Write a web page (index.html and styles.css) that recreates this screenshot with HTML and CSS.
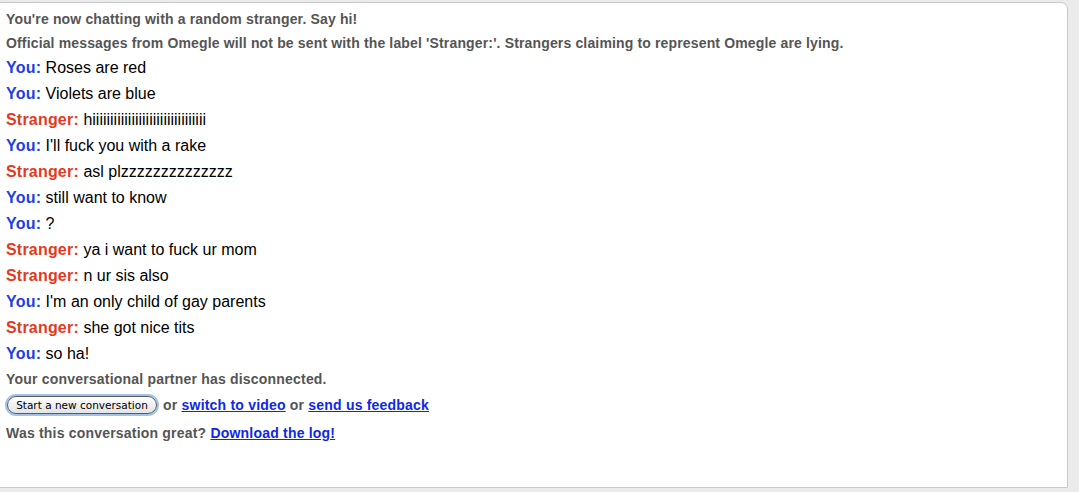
FILE: index.html
```html
<!DOCTYPE html>
<html>
<head>
<meta charset="utf-8">
<link rel="stylesheet" href="styles.css">
</head>
<body>
<div class="log">
  <div class="info">You're now chatting with a random stranger. Say hi!</div>
  <div class="info">Official messages from Omegle will not be sent with the label 'Stranger:'. Strangers claiming to represent Omegle are lying.</div>
  <div class="msg"><span class="you">You:</span> Roses are red</div>
  <div class="msg"><span class="you">You:</span> Violets are blue</div>
  <div class="msg"><span class="stranger">Stranger:</span> hiiiiiiiiiiiiiiiiiiiiiiiiiiiiiiii</div>
  <div class="msg"><span class="you">You:</span> I'll fuck you with a rake</div>
  <div class="msg"><span class="stranger">Stranger:</span> asl plzzzzzzzzzzzzzz</div>
  <div class="msg"><span class="you">You:</span> still want to know</div>
  <div class="msg"><span class="you">You:</span> ?</div>
  <div class="msg"><span class="stranger">Stranger:</span> ya i want to fuck ur mom</div>
  <div class="msg"><span class="stranger">Stranger:</span> n ur sis also</div>
  <div class="msg"><span class="you">You:</span> I'm an only child of gay parents</div>
  <div class="msg"><span class="stranger">Stranger:</span> she got nice tits</div>
  <div class="msg"><span class="you">You:</span> so ha!</div>
  <div class="status first">Your conversational partner has disconnected.</div>
  <div class="status actions"><button class="newbtn">Start a new conversation</button> or <a href="#">switch to video</a> or <a href="#">send us feedback</a></div>
  <div class="status great">Was this conversation great? <a href="#">Download the log!</a></div>
</div>
</body>
</html>
```
FILE: styles.css
```css
html, body {
  margin: 0;
  padding: 0;
  background: #ebebeb;
}
body {
  font-family: "Liberation Sans", Arial, sans-serif;
}
.log {
  box-sizing: border-box;
  margin: 2px 0 0 -1px;
  width: 1069px;
  height: 486px;
  background: #fff;
  border: 1px solid #c9c9c9;
  border-top-right-radius: 7px;
  padding: 4px 6px 0 6px;
}
.info {
  font-size: 14px;
  letter-spacing: 0.15px;
  font-weight: bold;
  color: #555;
  line-height: 24px;
  white-space: nowrap;
}
.msg {
  font-size: 16px;
  line-height: 26px;
  color: #000;
  white-space: nowrap;
}
.you, .stranger {
  font-weight: bold;
  letter-spacing: 0.2px;
}
.you { color: #1c3fe6; }
.stranger { color: #e33a1e; }
.status {
  font-size: 14px;
  letter-spacing: 0.2px;
  font-weight: bold;
  color: #555;
  line-height: 26px;
  white-space: nowrap;
}
.status.first {
  margin-top: -1px;
}
.status a {
  color: #0d28e8;
  text-decoration: underline;
}
.great {
  line-height: 28px;
  margin-top: 1px;
}
.newbtn {
  font-family: "DejaVu Sans", sans-serif;
  font-size: 10.5px;
  letter-spacing: 0;
  color: #000;
  height: 18px;
  width: 150px;
  padding: 0;
  margin: 0 2px 0 1px;
  border: 1px solid #5a5a5a;
  border-radius: 9px;
  background: linear-gradient(#ffffff, #f0f0f0 50%, #e4e4e4);
  box-shadow: 0 0 0 2px #9fc3ea;
  vertical-align: 1px;
  line-height: 16px;
}
```
